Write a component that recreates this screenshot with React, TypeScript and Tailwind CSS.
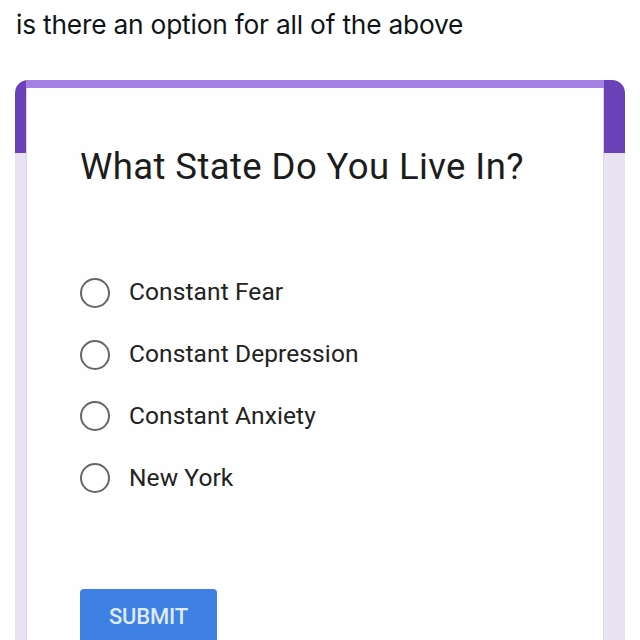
import React from "react";

const options = ["Constant Fear", "Constant Depression", "Constant Anxiety", "New York"];

export default function App() {
  return (
    <div className="w-[640px] h-[640px] bg-white overflow-hidden">
      <p className="pl-[16px] pt-[8px] text-[26.3px] leading-[34px] text-[#0f1419] font-['Inter','Noto_Sans',sans-serif] tracking-[-0.2px]">
        is there an option for all of the above
      </p>
      <div className="mt-[38px] ml-[15px] w-[610px] h-[600px] rounded-t-[13px] bg-[linear-gradient(to_bottom,#6a41b6_0px,#6a41b6_73px,#e9e3f3_73px)] flex pl-[11px] pr-[21px]">
        <div className="flex-1 flex flex-col">
          <div className="h-[8px] bg-[#a380e3]" />
          <div className="flex-1 bg-[#fefefe] border-l border-r border-[#d9d6de] pl-[53px] pt-[57px] font-['Roboto',sans-serif]">
            <h1 className="text-[36.5px] leading-[44px] text-[#1c1c1c] tracking-[0.4px]">What State Do You Live In?</h1>
            <div className="mt-[73px] flex flex-col">
              {options.map((o) => (
                <div key={o} className="h-[61.7px] flex items-center">
                  <div className="w-[30px] h-[30px] rounded-full border-[2.5px] border-[#666]" />
                  <span className="ml-[19px] text-[24.5px] text-[#222] tracking-[0.1px]">{o}</span>
                </div>
              ))}
            </div>
            <div className="mt-[80px] w-[137px] h-[60px] rounded-[4px] bg-[#3e80e4] flex justify-center pt-[15px]">
              <span className="text-[22px] leading-[26px] font-medium text-[#dfeafd] tracking-[-0.2px]">SUBMIT</span>
            </div>
          </div>
        </div>
      </div>
    </div>
  );
}
